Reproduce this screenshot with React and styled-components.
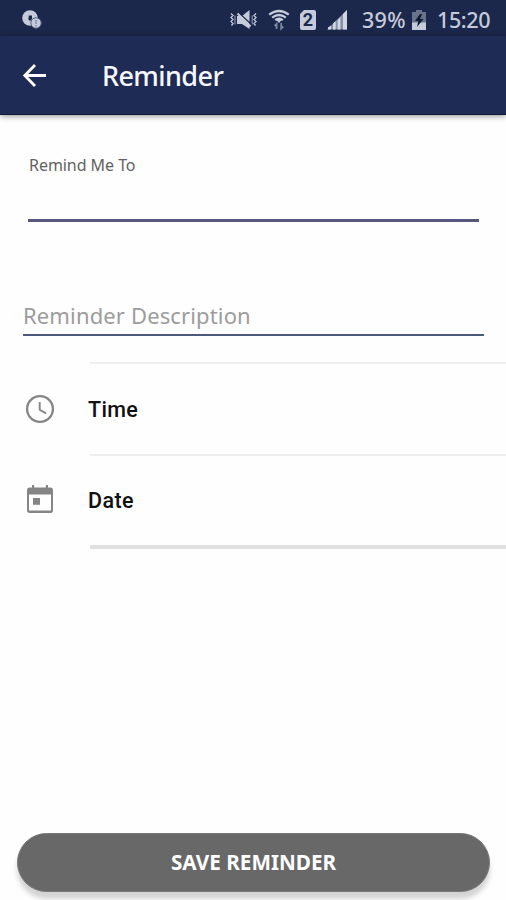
import React from 'react';
import styled, {createGlobalStyle} from "styled-components";

const GlobalStyle = createGlobalStyle`
  * {
    box-sizing: border-box;
  }

  body {
    margin: 0;
    background-color: #fefefe;
  }
`

const Container = styled.div`
  width: 506px;
  height: 900px;
  overflow: hidden;
  display: flex;
  flex-direction: column;
  background-color: #fefefe;
  font-family: "Noto Sans", sans-serif;
`

const StatusBar = styled.div`
  flex: none;
  height: 36px;
  padding: 4px 15px 0 22px;
  display: flex;
  align-items: center;
  background-color: #1b274b;
  color: #c6cbdb;
`

const StatusIcon = styled.svg`
  display: block;
  flex: none;
  margin-left: ${(props) => props.$gap || 0}px;
`

const StatusText = styled.span`
  margin-left: ${(props) => props.$gap}px;
  width: ${(props) => props.$width}px;
  font-size: 21.5px;
  font-weight: 500;
  line-height: 32px;
  letter-spacing: ${(props) => props.$spacing}px;
  white-space: nowrap;
`

const Spacer = styled.div`
  flex: 1;
`

const AppBar = styled.header`
  flex: none;
  height: 79px;
  padding: 2px 19px 0;
  display: flex;
  align-items: center;
  background-color: #1e2b55;
  border-bottom: 1px solid #10183d;
  box-shadow: 0 1px 6px rgba(0, 0, 0, 0.45);
`

const BackButton = styled.button`
  width: 32px;
  height: 32px;
  padding: 0;
  border: none;
  background: none;
  cursor: pointer;
`

const Title = styled.h1`
  margin: 0 0 0 51px;
  color: #f7f8ff;
  font-size: 27px;
  font-weight: 500;
  line-height: 36px;
  letter-spacing: -0.6px;
`

const Form = styled.div`
  flex: 1;
  display: flex;
  flex-direction: column;
`

const TitleField = styled.div`
  margin: 38px 27px 0 28px;
  height: 69px;
  border-bottom: 3px solid #57567c;
`

const Label = styled.label`
  display: block;
  padding-left: 1px;
  color: #626262;
  font-size: 16px;
  line-height: 24px;
  letter-spacing: -0.05px;
`

const DescriptionField = styled.div`
  margin: 78px 22px 0 23px;
  height: 36px;
  border-bottom: 2px solid #4b5a7c;
  color: #9c9c9c;
  font-size: 22px;
  line-height: 31px;
  letter-spacing: 0.14px;
`

const Options = styled.div`
  margin-top: 26px;
`

const Option = styled.div`
  display: flex;
  align-items: stretch;
  height: ${(props) => props.$height}px;
`

const OptionIcon = styled.div`
  width: 90px;
  padding: ${(props) => props.$top}px 0 0 22px;

  svg {
    display: block;
  }
`

const OptionBody = styled.div`
  flex: 1;
  border-top: ${(props) => props.$first ? "2px solid #eee" : "none"};
  border-bottom: ${(props) => props.$last ? "4px solid #e0e0e0" : "2px solid #eee"};
`

const OptionText = styled.div`
  margin: ${(props) => props.$top}px 0 0 -2px;
  color: #111;
  font-family: Roboto, sans-serif;
  font-size: 21.5px;
  font-weight: 500;
  line-height: 30px;
  letter-spacing: ${(props) => props.$spacing}px;
`

const SaveButton = styled.button`
  flex: none;
  margin: 0 16px 8px 17px;
  height: 59px;
  padding: 0 0 1px;
  border: 1px solid #777;
  border-radius: 30px;
  background-color: #686868;
  box-shadow: 0 7px 5px rgba(0, 0, 0, 0.17);
  color: #fff;
  font-family: "Noto Sans", sans-serif;
  font-size: 20.7px;
  font-weight: 700;
  text-transform: uppercase;
  cursor: pointer;
`

const NotificationIcon = () => (
    <StatusIcon width="22" height="20" viewBox="0 0 22 20" fill="#c6cbdb">
        <circle cx="8" cy="8" r="7.8"/>
        <path d="M6.8 5.5h3.2v3.6l-2 2-1.6-1.6z" fill="#1b274b"/>
        <circle cx="14" cy="13" r="5.2" stroke="#53607d" strokeWidth="1"/>
        <path d="M13.2 10h1.6v4h-1.6zM13.2 15h1.6v1.5h-1.6z" fill="#8a93aa"/>
    </StatusIcon>
)

const VibrateIcon = () => (
    <StatusIcon width="28" height="20" viewBox="0 0 28 20" fill="none" stroke="#c6cbdb">
        <path d="M2 3.500l2 2-2 2 2 2-2 2 2 2-1.500 2M27 3.500l-2 2 2 2-2 2 2 2-2 2 1.500 2" strokeWidth="1.300"/>
        <path d="M6 5.500v9M23.200 5.500v9" stroke="#8a93aa" strokeWidth="1.200"/>
        <path d="M8 6h5l7.500-6v19L13 14H8z" fill="#c6cbdb" stroke="none"/>
        <path d="M10.500 3.500l12 11" stroke="#1b274b" strokeWidth="1.300"/>
        <path d="M8.500 3.500l13 13" strokeWidth="2"/>
    </StatusIcon>
)

const WifiIcon = () => (
    <StatusIcon $gap={11} width="22" height="22" viewBox="0 0 22 22" fill="none" stroke="#c6cbdb">
        <path d="M1.2 5.7Q11-1.8 20.8 5.7M4.2 8.6Q11 3.4 17.8 8.6M7.2 11.2Q11 8.3 14.8 11.2" strokeWidth="2.3"/>
        <path d="M9 11l2 2.5 2-2.5z" fill="#c6cbdb"/>
        <path d="M8.6 20v-5l-2 2M13.2 14v5.5l2-2" stroke="#7d87a3" strokeWidth="1.8"/>
    </StatusIcon>
)

const SimBadge = styled.div`
  width: 16px;
  height: 20px;
  margin-left: 10px;
  border-radius: 2px;
  clip-path: polygon(4px 0, 100% 0, 100% 100%, 0 100%, 0 4px);
  background-color: #c6cbdb;
  color: #1b274b;
  font-family: Roboto, sans-serif;
  font-size: 18px;
  font-weight: 700;
  line-height: 20px;
  text-align: center;
`

const SignalIcon = () => (
    <StatusIcon $gap={11} width="21" height="20" viewBox="0 0 21 20">
        <path d="M0 19.5L20 0v19.5z" fill="#8590ad"/>
        <path d="M1 19.5v-2l3-2v4zM6 19.5v-6l2.7-2.5v8.5zM10.7 19.5V10l2.7-3v12.5zM16 19.5V4l4-4v19.5z" fill="#d2d6e0"/>
    </StatusIcon>
)

const BatteryIcon = () => (
    <StatusIcon width="14" height="20" viewBox="0 0 14 20">
        <path d="M4 0h6v2h4v18H0V2h4z" fill="#69738c"/>
        <path d="M0 12.5h14V20H0z" fill="#c6cbdb"/>
        <path d="M8 4L3 11h3.3L5 17l6.5-8H8l2-5z" fill="#101a34"/>
    </StatusIcon>
)

const BackIcon = () => (
    <svg width="32" height="32" viewBox="0 0 32 32" fill="none" stroke="#fff" strokeWidth="2.8">
        <path d="M27 15.5H6M16 5L5.8 15.5 16 26"/>
    </svg>
)

const ClockIcon = () => (
    <svg width="36" height="36" viewBox="0 0 36 36" fill="none" stroke="#858585">
        <circle cx="18" cy="17" r="12.9" strokeWidth="2.3"/>
        <path d="M17.7 10v7.8l6.3 3.6" strokeWidth="1.9"/>
    </svg>
)

const CalendarIcon = () => (
    <svg width="36" height="36" viewBox="0 0 36 36" fill="#858585">
        <path fillRule="evenodd" d="M10 3h2.2v2.5h11.6V3H26v2.5h2.3Q31 5.5 31 8.2v20Q31 31 28.3 31H7.7Q5 31 5 28.3V8.2Q5 5.5 7.700 5.5H10zM7 12.5v16h22V12.500z"/>
        <path d="M11 16h7v6.8h-7z"/>
    </svg>
)

const App = () => {
    return (
        <Container>
            <GlobalStyle/>
            <StatusBar>
                <NotificationIcon/>
                <Spacer/>
                <VibrateIcon/>
                <WifiIcon/>
                <SimBadge>2</SimBadge>
                <SignalIcon/>
                <StatusText $gap={14} $width={50} $spacing={0.3}>39%</StatusText>
                <BatteryIcon/>
                <StatusText $gap={11} $width={54} $spacing={-0.4}>15:20</StatusText>
            </StatusBar>
            <AppBar>
                <BackButton aria-label="Back"><BackIcon/></BackButton>
                <Title>Reminder</Title>
            </AppBar>
            <Form>
                <TitleField>
                    <Label>Remind Me To</Label>
                </TitleField>
                <DescriptionField>Reminder Description</DescriptionField>
                {/* reminder options */}
                <Options>
                    <Option $height={94}>
                        <OptionIcon $top={30}><ClockIcon/></OptionIcon>
                        <OptionBody $first>
                            <OptionText $top={31} $spacing={0.3}>Time</OptionText>
                        </OptionBody>
                    </Option>
                    <Option $height={93}>
                        <OptionIcon $top={26}><CalendarIcon/></OptionIcon>
                        <OptionBody $last>
                            <OptionText $top={30} $spacing={0.4}>Date</OptionText>
                        </OptionBody>
                    </Option>
                </Options>
            </Form>
            <SaveButton>Save Reminder</SaveButton>
        </Container>
    );
};

export default App;
